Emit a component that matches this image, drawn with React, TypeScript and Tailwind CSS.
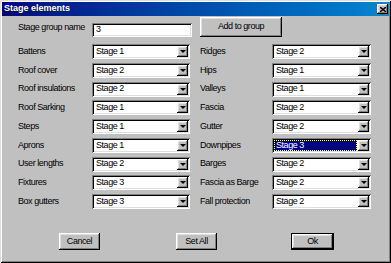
import React from 'react';

const leftRows = [
  ['Battens', 'Stage 1'],
  ['Roof cover', 'Stage 2'],
  ['Roof insulations', 'Stage 2'],
  ['Roof Sarking', 'Stage 1'],
  ['Steps', 'Stage 1'],
  ['Aprons', 'Stage 1'],
  ['User lengths', 'Stage 2'],
  ['Fixtures', 'Stage 3'],
  ['Box gutters', 'Stage 3'],
];

const rightRows = [
  ['Ridges', 'Stage 2'],
  ['Hips', 'Stage 1'],
  ['Valleys', 'Stage 1'],
  ['Fascia', 'Stage 2'],
  ['Gutter', 'Stage 2'],
  ['Downpipes', 'Stage 3'],
  ['Barges', 'Stage 2'],
  ['Fascia as Barge', 'Stage 2'],
  ['Fall protection', 'Stage 2'],
];

const raised =
  'shadow-[inset_-1px_-1px_0_#000,inset_1px_1px_0_#fff,inset_-2px_-2px_0_#808080,inset_2px_2px_0_#dfdfdf]';
const sunken =
  'shadow-[inset_1px_1px_0_#808080,inset_-1px_-1px_0_#fff,inset_2px_2px_0_#000,inset_-2px_-2px_0_#dfdfdf]';

const Combo = ({ value, selected }: { value: string; selected?: boolean }) => (
  <div className={`h-[15px] bg-white flex items-stretch ${sunken}`}>
    {selected ? (
      <div className="flex-1 m-[2px] mr-[1px] flex items-center pl-[1px] bg-[#000080] text-white border border-dotted border-[#ffff80]">
        {value}
      </div>
    ) : (
      <div className="flex-1 flex items-center pl-[4px]">{value}</div>
    )}
    <div className={`w-[11px] my-[2px] mr-[2px] bg-[#c0c0c0] flex items-center justify-center ${raised}`}>
      <div className="w-0 h-0 border-x-[3px] border-x-transparent border-t-[3px] border-t-black" />
    </div>
  </div>
);

const Button = ({ label, width, isDefault }: { label: string; width: string; isDefault?: boolean }) => (
  <div className={`${width} h-[17px] ${isDefault ? 'border border-black' : ''}`}>
    <div className={`w-full h-full bg-[#c0c0c0] flex items-center justify-center ${raised}`}>{label}</div>
  </div>
);

export default function App() {
  return (
    <div className="w-[391px] h-[263px] bg-[#c0c0c0] font-['Liberation_Sans',Arial,sans-serif] text-[9px] tracking-[-0.45px] text-black shadow-[inset_1px_1px_0_#dfdfdf,inset_-1px_-1px_0_#000,inset_2px_2px_0_#fff,inset_-2px_-2px_0_#808080] p-[2px] flex flex-col">
      {/* Title bar */}
      <div className="h-[14px] bg-linear-to-r from-[#000080] to-[#1084d0] flex items-center justify-between pl-[2px] pr-[1px]">
        <span className="text-white font-bold tracking-normal">Stage elements</span>
        <div className={`w-[11px] h-[10px] bg-[#c0c0c0] flex items-center justify-center ${raised}`}>
          <svg width="6" height="5" viewBox="0 0 6 5">
            <path d="M0 0 L6 5 M6 0 L0 5" stroke="#000" strokeWidth="1.4" />
          </svg>
        </div>
      </div>

      {/* Group name row */}
      <div className="flex items-end pl-[16px] mt-[1px]">
        <div className="w-[74px] pb-[3px]">Stage group name</div>
        <div className={`w-[100px] h-[14px] bg-white flex items-center pl-[4px] ${sunken}`}>3</div>
        <div className="ml-[8px]">
          <div className={`w-[82px] h-[20px] bg-[#c0c0c0] flex items-center justify-center ${raised}`}>Add to group</div>
        </div>
      </div>

      {/* Element rows */}
      <div className="flex gap-x-[10px] pl-[16px] mt-[7px]">
        <div className="grid grid-cols-[74px_98px] auto-rows-[15px] gap-y-[3.75px]">
          {leftRows.map(([label, value]) => (
            <React.Fragment key={label}>
              <div className="flex items-center">{label}</div>
              <Combo value={value} />
            </React.Fragment>
          ))}
        </div>
        <div className="grid grid-cols-[72px_99px] auto-rows-[15px] gap-y-[3.75px]">
          {rightRows.map(([label, value]) => (
            <React.Fragment key={label}>
              <div className="flex items-center">{label}</div>
              <Combo value={value} selected={label === 'Downpipes'} />
            </React.Fragment>
          ))}
        </div>
      </div>

      {/* Bottom buttons */}
      <div className="flex mt-[24px] pl-[57px]">
        <Button label="Cancel" width="w-[41px]" />
        <div className="ml-[76px]">
          <Button label="Set All" width="w-[41px]" />
        </div>
        <div className="ml-[74px]">
          <Button label="Ok" width="w-[43px]" isDefault />
        </div>
      </div>
    </div>
  );
}
